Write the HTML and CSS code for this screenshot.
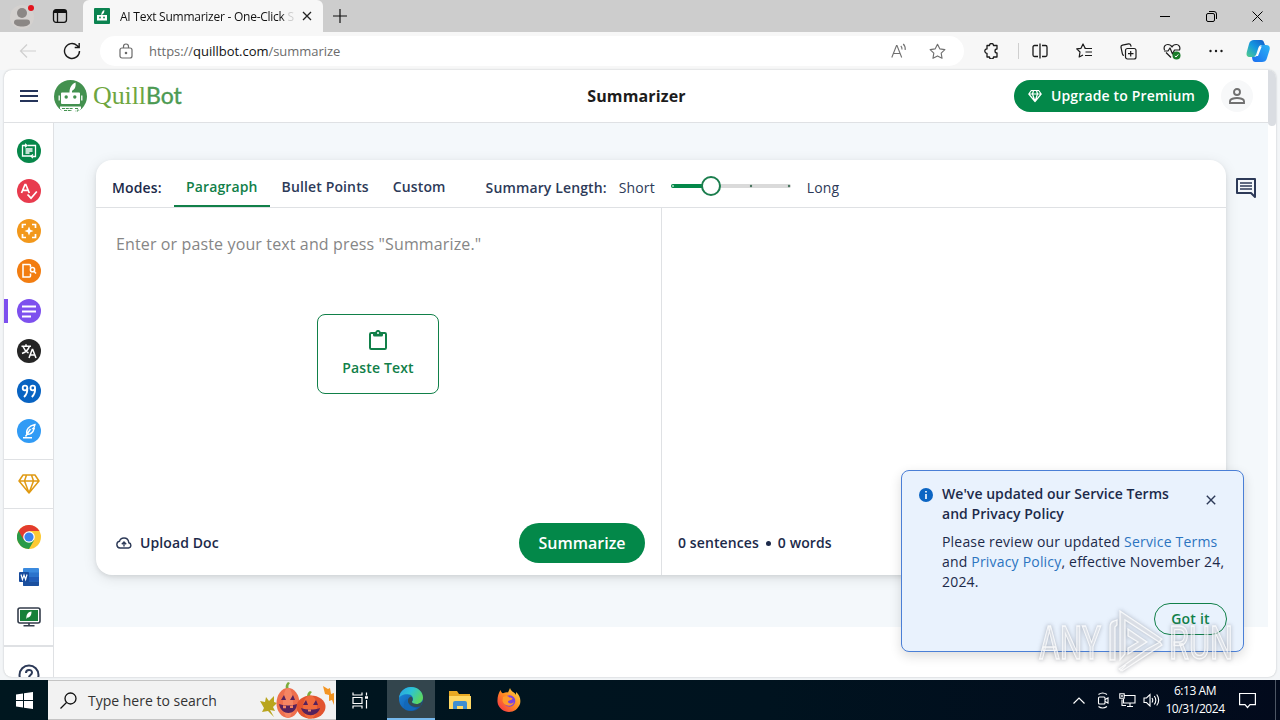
FILE: index.html
```html
<!DOCTYPE html>
<html lang="en">
<head>
    <meta charset="UTF-8">
    <meta name="viewport" content="width=device-width, initial-scale=1.0">
    <title>AI Text Summarizer</title>
    <link rel="stylesheet" href="styles.css">
</head>
<body>
<div class="tabstrip">
    <div class="profile">
        <svg width="44" height="32" viewBox="0 0 44 32"><circle cx="22" cy="17" r="12" fill="#d4d1cf"/><circle cx="22" cy="13" r="5" fill="#8b8785"/><path d="M14 22.500c0-2 1-3 3-3h10c2 0 3 1 3 3 0 2.500-4 4-8 4s-8-1.500-8-4z" fill="#8b8785"/><circle cx="31" cy="8" r="3" fill="#e3141d"/></svg>
    </div>
    <div class="workspaces">
        <svg width="16" height="16" viewBox="0 0 16 16" fill="none" stroke="#111" stroke-width="1.300"><rect x="1.500" y="1.700" width="13" height="12.600" rx="2.500"/><path d="M2 3.500h12" stroke-width="3"/><path d="M5.500 4v10"/></svg>
    </div>
    <div class="tab">
        <svg width="16" height="16" viewBox="0 0 16 16"><rect width="16" height="16" rx="1" fill="#0b8350"/><path d="M3 7h10v5.500H3zM7.300 7c0-2.500 1-4 3-5 .3 2-.6 3.700-2 4.300V7z" fill="#fff"/><circle cx="6" cy="9.500" r=".9" fill="#0b8350"/><circle cx="10" cy="9.500" r=".9" fill="#0b8350"/></svg>
        <span class="tab-title">AI Text Summarizer - One-Click S</span>
        <svg width="10" height="10" viewBox="0 0 10 10" stroke="#222" stroke-width="1.300"><path d="M1 1l8 8M9 1L1 9"/></svg>
    </div>
    <div class="new-tab">
        <svg width="14" height="14" viewBox="0 0 14 14" stroke="#111" stroke-width="1.200"><path d="M7 0v14M0 7h14"/></svg>
    </div>
    <div class="window-buttons">
        <span><svg width="10" height="10" viewBox="0 0 10 10" stroke="#000"><path d="M0 5.500h10"/></svg></span>
        <span><svg width="11" height="11" viewBox="0 0 11 11" fill="none" stroke="#000"><rect x=".5" y="2.500" width="8" height="8" rx="1.500"/><path d="M3 .5h5a2.500 2.500 0 0 1 2.500 2.500v5"/></svg></span>
        <span><svg width="11" height="11" viewBox="0 0 11 11" stroke="#000"><path d="M.5.500l10 10M10.500.500l-10 10"/></svg></span>
    </div>
</div>

<div class="toolbar">
    <span class="tool tool-first"><svg width="18" height="16" viewBox="0 0 18 16" fill="none" stroke="#cfcfcf" stroke-width="1.200"><path d="M17 8H1.500M8 1.500L1.500 8 8 14.500"/></svg></span>
    <span class="tool"><svg width="18" height="18" viewBox="0 0 18 18" fill="none" stroke="#1b1b1b" stroke-width="1.400"><path d="M16.500 9A7.500 7.500 0 1 1 14 3.400L16 5.300M16.200 1v4.500h-4.500"/></svg></span>
    <div class="address">
        <svg width="14" height="16" viewBox="0 0 14 16" fill="none" stroke="#6a6a6a" stroke-width="1.200"><rect x="1" y="5" width="12" height="10" rx="2"/><path d="M4.500 5V3.500a2.500 2.500 0 0 1 5 0V5"/><circle cx="7" cy="10" r=".7" fill="#6a6a6a"/></svg>
        <span class="url">https://<b>quillbot.com</b>/summarize</span>
        <span class="address-icon"><svg width="16" height="16" viewBox="0 0 16 16" fill="none" stroke="#707070" stroke-width="1.100"><path d="M.8 14.500L5.500 2.500h.5l4.700 12M2.500 10.500H9M9.800 3c1 .9 1.300 2.100 1.200 3.500M12.200 1c1.700 1.600 2.300 3.700 2 6"/></svg></span>
        <span class="address-icon"><svg width="17" height="17" viewBox="0 0 18 18" fill="none" stroke="#707070" stroke-width="1.200" stroke-linejoin="round"><path d="M9 1.300l2.400 4.900 5.400.8-3.900 3.800.9 5.400L9 13.700l-4.800 2.500.9-5.400L1.200 7l5.400-.8z"/></svg></span>
    </div>
    <span class="tool"><svg width="16" height="16" viewBox="0 0 16 16" fill="none" stroke="#1b1b1b" stroke-width="1.300" stroke-linejoin="round"><path d="M4 2.500h2.500a2 2 0 0 1 4 0H14V6a2 2 0 0 0 0 4v4h-3.500a2 2 0 0 1-4 0H4v-3.700a2.200 2.200 0 1 1 0-4.400z"/></svg></span>
    <span class="tool-divider"></span>
    <span class="tool"><svg width="16" height="16" viewBox="0 0 16 16" fill="none" stroke="#1b1b1b" stroke-width="1.300"><path d="M6 2.500H2.500a1.500 1.500 0 0 0-1.500 1.500v8a1.500 1.500 0 0 0 1.500 1.500H6M10 2.500h3.500A1.500 1.500 0 0 1 15 4v8a1.500 1.500 0 0 1-1.500 1.500H10M8 .5v15"/></svg></span>
    <span class="tool"><svg width="17" height="16" viewBox="0 0 17 16" fill="none" stroke="#1b1b1b" stroke-width="1.200" stroke-linejoin="round"><path d="M9.500 5.500L9 5 7 1 5 5.300l-4.300.6L4 9l-.8 5L7 12M8.500 5.500h7.500M9.500 9h6.500M9 12.500h7"/></svg></span>
    <span class="tool"><svg width="17" height="17" viewBox="0 0 17 17" fill="none" stroke="#1b1b1b" stroke-width="1.200"><rect x="5.500" y="5.500" width="10.500" height="10.500" rx="2"/><path d="M10.700 8v5.500M8 10.700h5.500M4 12.500a2 2 0 0 1-1.600-1.600L1 4.500A2 2 0 0 1 2.500 2.200l6-1.300a2 2 0 0 1 2.300 1.500l.3 1.300"/></svg></span>
    <span class="tool"><svg width="18" height="17" viewBox="0 0 18 17" fill="none" stroke="#1b1b1b" stroke-width="1.200" stroke-linejoin="round"><path d="M1.500 7C.2 3.500 2.500 1.500 4.800 1.500 6.800 1.500 8.300 2.600 9 4c.7-1.400 2.200-2.500 4.200-2.500C15.800 1.500 17.700 4 16.500 7M3 9.500l5 5M1 8h4l2-3 2.500 6L11.500 7H17"/><circle cx="13.500" cy="12.500" r="4" fill="#187c28" stroke="none"/><path d="M11.800 13l1.200 1 2.300-2.600" stroke="#fff" stroke-width="1"/></svg></span>
    <span class="tool"><svg width="14" height="4" viewBox="0 0 14 4" fill="#1b1b1b"><circle cx="1.500" cy="2" r="1.200"/><circle cx="7" cy="2" r="1.200"/><circle cx="12.500" cy="2" r="1.200"/></svg></span>
    <span class="tool tool-copilot">
        <svg width="24" height="24" viewBox="0 0 24 24">
            <defs>
                <linearGradient id="cp1" x1="1" y1="0" x2="0" y2="1"><stop offset="0" stop-color="#1559c9"/><stop offset=".5" stop-color="#1498e0"/><stop offset="1" stop-color="#55cf88"/></linearGradient>
                <linearGradient id="cp2" x1="0" y1="1" x2="1" y2="0"><stop offset="0" stop-color="#1b6df0"/><stop offset="1" stop-color="#2cb4f5"/></linearGradient>
            </defs>
            <path d="M8 1h7c2 0 2.600 1 3.200 3L19 6h-3c-2 0-3 1-3.700 3l-2.300 7c-.7 1.500-1.500 2-3 2H4c-3 0-4-1.500-3.200-5L3 5c.9-3 2.500-4 5-4z" fill="url(#cp1)"/>
            <path d="M16 23H9.500c-2 0-2.700-1-3.200-3L6 18h2c2 0 3-1 3.700-3l2.500-7c.6-1.500 1.300-2 3-2H20c3 0 4.400 1.500 3.500 5L21 19c-.8 3-2.500 4-5 4z" fill="url(#cp2)"/>
            <path d="M13.500 7.500h2.200L12 17H8.500c1.500 0 2.400-1 3-2.700z" fill="#fff"/>
        </svg>
    </span>
</div>

<div class="page">
    <div class="page-body">
        <header class="header">
            <div class="header-left">
                <svg width="18" height="12" viewBox="0 0 18 12" fill="#25345a"><path d="M0 0h18v2H0zM0 5h18v2H0zM0 10h18v2H0z"/></svg>
                <svg class="logo-mark" width="33" height="33" viewBox="0 0 33 33"><circle cx="16.500" cy="16.500" r="16.500" fill="#43914f"/><path d="M6 26.500h21v2L23.500 33H10L6 28.500z" fill="#fff"/><path d="M8 12.500h7.500c0-4 1.500-8 6-10 .7 4-.7 7-3.500 8.200v1.800h7a1 1 0 0 1 1 1V23a1 1 0 0 1-1 1H8a1 1 0 0 1-1-1v-9.500a1 1 0 0 1 1-1z" fill="#fff"/><path d="M5.200 15.500v5M27.800 15.500v5" stroke="#fff" stroke-width="1.300"/><circle cx="12.200" cy="17" r="1.700" fill="#43914f"/><circle cx="20.800" cy="17" r="1.700" fill="#43914f"/><path d="M8 28.500h11M10 30.500h8M21 28.500h3v2.500h-2.500" stroke="#43914f" stroke-width="1" stroke-dasharray="3 .8" fill="none"/></svg>
                <span class="logo-text"><span class="logo-quill">Quill</span><span class="logo-bot">Bot</span></span>
            </div>
            <h1>Summarizer</h1>
            <div class="header-right">
                <button type="button" class="upgrade">
                    <svg width="14" height="14" viewBox="0 0 14 14" fill="none" stroke="#fff" stroke-width="1.200" stroke-linejoin="round"><path d="M3.300 1.500h7.400L13.200 5 7 12.500.8 5zM.8 5h12.400M7 12.500L4.500 5 5.500 1.500M7 12.500L9.500 5l-1-3.500"/></svg>
                    Upgrade to Premium
                </button>
                <span class="account"><svg width="16" height="16" viewBox="0 0 16 16" fill="none" stroke="#717171" stroke-width="1.900"><circle cx="8" cy="4" r="3"/><path d="M1 15v-2c0-2 4-3 7-3s7 1 7 3v2z"/></svg></span>
            </div>
        </header>
        <div class="content">
            <nav class="sidebar">
                <div class="side-group">
                    <a class="side-item"><svg width="24" height="24" viewBox="0 0 24 24" fill="none" stroke="#fff" stroke-width="1.300"><circle cx="12" cy="12" r="12" fill="#07874a" stroke="none"/><path d="M9 6.500H5.500v10.500h10M15.500 17.500h3V6.500H10.500M8.500 10h7M8.500 12h7M8.500 14h4"/><path d="M8 4.700l2 1.800-2 1.800M16 15.500l-2 1.800 2 1.800" stroke-width="1.200"/></svg></a>
                    <a class="side-item"><svg width="24" height="24" viewBox="0 0 24 24" fill="none" stroke="#fff" stroke-width="1.700"><circle cx="12" cy="12" r="12" fill="#e83b4e" stroke="none"/><path d="M4.500 14L8 5.500h.8L12.300 14M5.800 11.300H11M10.500 15.500l3.500 3.700 5.800-6.700"/></svg></a>
                    <a class="side-item"><svg width="24" height="24" viewBox="0 0 24 24" fill="none" stroke="#fff" stroke-width="1.700"><circle cx="12" cy="12" r="12" fill="#f2981b" stroke="none"/><path d="M9 5.500H5.500V9M15 5.500h3.500V9M9 18.500H5.500V15M15 18.500h3.500V15"/><path d="M12 7.500l1.300 3.200 3.200 1.300-3.200 1.300L12 16.500l-1.300-3.200L7.500 12l3.200-1.300z" fill="#fff" stroke="none"/></svg></a>
                    <a class="side-item"><svg width="24" height="24" viewBox="0 0 24 24" fill="none" stroke="#fff" stroke-width="1.500"><circle cx="12" cy="12" r="12" fill="#f27d11" stroke="none"/><path d="M13.500 8.500V6.500a1 1 0 0 0-1-1H6v12.500h6.500a1 1 0 0 0 1-1V14.500"/><circle cx="15.500" cy="10.700" r="2.100"/><path d="M17 12.300l2 2.200"/></svg></a>
                    <a class="side-item active"><svg width="24" height="24" viewBox="0 0 24 24" fill="none" stroke="#fff" stroke-width="2.200"><circle cx="12" cy="12" r="12" fill="#7d50ee" stroke="none"/><path d="M5 7.500h14M5 12.500h14M5 17.500h9"/></svg></a>
                    <a class="side-item"><svg width="24" height="24" viewBox="0 0 24 24" fill="none" stroke="#fff" stroke-width="1.500"><circle cx="12" cy="12" r="12" fill="#262626" stroke="none"/><path d="M4.500 7.300h9.500M9 5.300v2M6 7.500c1.500 4 3.700 5.500 5.500 6.500M12.300 7.500c-1 3.500-4 5.800-7.300 7M12 19l3.200-8.500h.5L19 19M13.200 16h4.600"/></svg></a>
                    <a class="side-item"><svg width="24" height="24" viewBox="0 0 24 24" fill="none" stroke="#fff" stroke-width="1.800"><circle cx="12" cy="12" r="12" fill="#0863c2" stroke="none"/><circle cx="8" cy="9" r="2.300"/><circle cx="15.800" cy="9" r="2.300"/><path d="M10.300 9c.3 3.500-.6 6.500-3.300 9M18.100 9c.3 3.500-.6 6.500-3.300 9"/></svg></a>
                    <a class="side-item"><svg width="24" height="24" viewBox="0 0 24 24" fill="none" stroke="#fff" stroke-width="1.400"><circle cx="12" cy="12" r="12" fill="#319bf5" stroke="none"/><path d="M6 18.800h9M8.500 17.500l5-7.500M10 15.500C8.500 11 12 6.500 18 5.500c-.3 2-.8 3-2 4h1.200c-1 3.500-3.700 6-7.200 6z"/></svg></a>
                </div>
                <div class="side-group side-premium">
                    <a class="side-item"><svg width="22" height="20" viewBox="0 0 22 20" fill="none" stroke="#e09a13" stroke-width="1.500" stroke-linejoin="round"><path d="M5 1h12l4 6-10 12L1 7zM1 7h20M11 19L6.500 7 8.500 1M11 19l4.500-12-2-6"/></svg></a>
                </div>
                <div class="side-group">
                    <a class="side-item"><svg width="24" height="24" viewBox="0 0 24 24"><circle cx="12" cy="12" r="12" fill="#fcc934"/><path d="M1.600 6A12 12 0 0 0 12 24l5.200-9L12 12z" fill="#2a9a48"/><path d="M1.600 6A12 12 0 0 1 22.400 6H12L6.800 15z" fill="#e33b2e"/><circle cx="12" cy="12" r="5.800" fill="#fff"/><circle cx="12" cy="12" r="4.600" fill="#3b82ee"/></svg></a>
                    <a class="side-item"><svg width="22" height="20" viewBox="0 0 22 20"><rect x="5" y="1" width="16" height="18" rx="1" fill="#3b8ade"/><path d="M5 5.500h16V10H5z" fill="#2b73cc"/><path d="M5 10h16v4.500H5z" fill="#205cb8"/><path d="M5 14.500h16V18a1 1 0 0 1-1 1H6a1 1 0 0 1-1-1z" fill="#1b4f9e"/><rect x="1" y="5" width="10" height="10" rx="1" fill="#174b9c"/><path d="M3 7.500l1.400 5L6 8l1.600 4.500 1.400-5" fill="none" stroke="#fff" stroke-width="1.200"/></svg></a>
                    <a class="side-item"><svg width="24" height="20" viewBox="0 0 24 20"><rect x="1" y="1" width="22" height="15" rx="2" fill="#fff" stroke="#343d4b" stroke-width="1.600"/><rect x="3" y="3" width="18" height="11" fill="#168039"/><path d="M9.500 12c-.5-4 1-7 5-7.500 0 3.500-1.300 6-4 6z" fill="#fff"/><path d="M12 16v2.500M6.500 18.800h11" stroke="#343d4b" stroke-width="1.600"/></svg></a>
                </div>
                <div class="side-help"><svg width="22" height="22" viewBox="0 0 22 22" fill="none" stroke="#2d3a58" stroke-width="2"><circle cx="11" cy="11" r="9.500"/><path d="M8 9c0-4 6-4 6-.5 0 2.500-3 2.500-3 5"/></svg></div>
            </nav>
            <main>
                <section class="card">
                    <div class="modes">
                        <span class="modes-label">Modes:</span>
                        <a class="mode selected">Paragraph</a>
                        <a class="mode">Bullet Points</a>
                        <a class="mode">Custom</a>
                        <span class="length-label">Summary Length:</span>
                        <span class="length-text">Short</span>
                        <span class="slider"><svg width="120" height="22" viewBox="0 0 120 22"><path d="M2 11h116" stroke="#dadada" stroke-width="4" stroke-linecap="round"/><path d="M2 11h38" stroke="#038849" stroke-width="4" stroke-linecap="round"/><circle cx="2" cy="11" r="1" fill="#b5e0c8"/><circle cx="80" cy="11" r="1.200" fill="#4b7561"/><circle cx="118" cy="11" r="1.200" fill="#4b7561"/><circle cx="40" cy="11" r="9" fill="#fff" stroke="#1c7e4e" stroke-width="2"/></svg></span>
                        <span class="length-text">Long</span>
                    </div>
                    <div class="panels">
                        <div class="input-panel">
                            <p class="placeholder">Enter or paste your text and press "Summarize."</p>
                            <button type="button" class="paste">
                                <svg width="18" height="20" viewBox="0 0 18 20"><rect x="1" y="3" width="16" height="16" rx="1.200" fill="none" stroke="#118049" stroke-width="2"/><path d="M4 2h2.300a2.800 2.800 0 0 1 5.400 0H14v3a1.500 1.500 0 0 1-1.500 1.500h-7A1.500 1.500 0 0 1 4 5z" fill="#118049"/><circle cx="9" cy="3" r="1" fill="#fff"/></svg>
                                Paste Text
                            </button>
                            <div class="input-footer">
                                <span class="upload">
                                    <svg width="16" height="12" viewBox="0 0 16 12" fill="none" stroke="#2d3a58" stroke-width="1.400"><path d="M4 11h8.500a2.700 2.700 0 0 0 .3-5.300C12.500 3 10.500 1 8 1S4 2.300 3.500 4.300A3.400 3.400 0 0 0 4 11zM8 9.500V5.500M5.800 7.200L8 5l2.200 2.200"/></svg>
                                    <span>Upload Doc</span>
                                </span>
                                <button type="button" class="summarize">Summarize</button>
                            </div>
                        </div>
                        <div class="output-panel">
                            <span>0 sentences</span><i class="dot"></i><span>0 words</span>
                        </div>
                    </div>
                </section>
                <svg class="comments" width="20" height="20" viewBox="0 0 20 20"><path d="M1 1h18v18l-4-4H1z" fill="none" stroke="#2d3a58" stroke-width="2" stroke-linejoin="round"/><path d="M4 5h12M4 8h12M4 11h12" stroke="#2d3a58" stroke-width="1.700"/></svg>
            </main>
        </div>
    </div>
    <div class="scrollbar"></div>
</div>

<aside class="notice">
    <svg class="notice-icon" width="14" height="14" viewBox="0 0 14 14"><circle cx="7" cy="7" r="7" fill="#0b65c3"/><path d="M7 6v5M7 3v1.600" stroke="#fff" stroke-width="1.600"/></svg>
    <div class="notice-body">
        <h2>We've updated our Service Terms<br>and Privacy Policy</h2>
        <p>Please review our updated <a>Service Terms</a><br>and <a>Privacy Policy</a>, effective November 24,<br>2024.</p>
        <button type="button" class="got-it">Got it</button>
    </div>
    <svg class="notice-close" width="10" height="10" viewBox="0 0 10 10" stroke="#2d3a58" stroke-width="1.400"><path d="M.8.8l8.400 8.400M9.200.8L.8 9.200"/></svg>
</aside>

<svg class="watermark" width="210" height="70" viewBox="0 0 210 70">
    <g fill="#fff" fill-opacity=".4" stroke="#fff" stroke-opacity=".8" stroke-width="1.300">
        <text x="9" y="54" textLength="62" lengthAdjust="spacingAndGlyphs">ANY</text>
        <text x="139" y="54" textLength="64" lengthAdjust="spacingAndGlyphs">RUN</text>
        <path d="M80 55V22q0-5 4-6l3-1v5l-2 2v33zM90 6l42 28-3 3-34-22v34l-5 6zM90 66l6-6M93 61l24-17 13-7 2 3-40 26-3-2zM98 24l19 13-19 12v-6l10-6-10-6z"/>
    </g>
</svg>

<footer class="taskbar">
    <span class="start"><svg width="17" height="17" viewBox="0 0 17 17" fill="#fff"><path d="M0 2.500l7-1V8H0zM8 1.300L17 0v8H8zM0 9h7v6.500l-7-1zM8 9h9v8l-9-1.300z"/></svg></span>
    <div class="search">
        <svg width="17" height="17" viewBox="0 0 17 17" fill="none" stroke="#111" stroke-width="1.300"><circle cx="10.500" cy="6.500" r="5.500"/><path d="M6.500 10.500L.5 16.500"/></svg>
        <span>Type here to search</span>
        <svg class="pumpkins" width="76" height="38" viewBox="0 0 76 38">
            <path d="M2 20l5 1 1-5 3 4 5-5v6l3 1-4 4 2 4-5-1 4 7-6-6-6 1 2-4z" fill="#b9a51e"/>
            <path d="M65 5l5 3 2-1 1 6 3-1v12l-2-5-3 1 0-6-4-1z" fill="#f39422"/>
            <path d="M28 8c-1-3 0-5 2-7l2 1c-2 2-2 4-1 6zM49 16c0-3 1-5 3-6l2 1c-2 2-2 3-2 5z" fill="#7cab3a"/>
            <ellipse cx="30" cy="22" rx="11.500" ry="15" fill="#ee6f4e"/><ellipse cx="30" cy="22" rx="5" ry="15" fill="#f58563"/>
            <ellipse cx="53" cy="26" rx="14.500" ry="11.500" fill="#e2542f"/><ellipse cx="52" cy="26" rx="7" ry="11.500" fill="#f06a3c"/>
            <path d="M23 19l3-5 2 5zM32 19l3-5 2 5zM21 23c6 2 12 2 18 0-1 12-16 12-18 0zM45 24l3-5 2 5zM55 24l3-5 2 5zM43 27c6 2 13 2 19 0-2 9-16 10-19 0z" fill="#57225c"/>
            <path d="M25 24.500l3 .2v2.500h-3zM32 24.700l3-.4v2.700h-3zM50 28.500h3v2h-3z" fill="#f58563"/>
        </svg>
    </div>
    <span class="task"><svg width="17" height="17" viewBox="0 0 17 17" fill="none" stroke="#fff" stroke-width="1.200"><path d="M1 .5V3h9V.5M1 16.500V14h9v2.500M1 5.500h9v6H1zM14.500.5v3M14.500 8v8.500"/><path d="M13 5.500h3" stroke-width="2.500"/></svg></span>
    <span class="task open">
        <svg width="24" height="24" viewBox="0 0 24 24">
            <defs>
                <linearGradient id="e1" x1="0" y1="0" x2="1" y2=".5"><stop offset="0" stop-color="#2a9de5"/><stop offset=".5" stop-color="#2cc3d5"/><stop offset="1" stop-color="#5bd662"/></linearGradient>
                <linearGradient id="e2" x1="0" y1="0" x2="1" y2="1"><stop offset="0" stop-color="#1d8cdf"/><stop offset="1" stop-color="#0d4a9b"/></linearGradient>
            </defs>
            <circle cx="12" cy="12" r="12" fill="url(#e2)"/>
            <path d="M0 11C1 4 6 0 12 0c7 0 12 5 12 10.500 0 4-3 6.500-6.500 6.500-3 0-5-1-4.500-2.500 2-2 1-6.500-3-7C5 6.500 1 9 0 11z" fill="url(#e1)"/>
            <path d="M13 14.500c-.5 1.500 1.500 2.500 4.500 2.500 2 0 3.500-.5 6-2.500L21.500 19.500C16 21 10 19 9 15c-.5-3 1-5 3-5.500 2 1 2 3.500 1 5z" fill="#344a52"/>
            <path d="M9 12c-2 4 2 9 9 9-3 3-8 3.500-12 1C4 17 5 12.500 9 12z" fill="#1368b8"/>
        </svg>
    </span>
    <span class="task"><svg width="22" height="20" viewBox="0 0 22 20"><path d="M0 1h8l2 3h11v15H0z" fill="#e8a923"/><path d="M0 6h22v13H0z" fill="#ffd864"/><path d="M4 19v-6q0-2 2-2h10q2 0 2 2v6h-4v-3H8v3z" fill="#3f8ed0"/></svg></span>
    <span class="task">
        <svg width="24" height="24" viewBox="0 0 24 24">
            <defs><linearGradient id="ff" x1="1" y1="0" x2="0" y2="1"><stop offset="0" stop-color="#ffe14a"/><stop offset=".5" stop-color="#ff8a21"/><stop offset="1" stop-color="#f3244f"/></linearGradient></defs>
            <path d="M3.500 2C4 4 5 5 6 5.200 8 4.500 10 4 11 4.500L13 0c1 4 5 4 6 7V4c4 3 5 8 4 12-2 5-6 8-11 8S1 20 .5 14C.2 9 1.500 5 3.500 2z" fill="url(#ff)"/>
            <circle cx="12.500" cy="13" r="5.800" fill="#7a42e0"/>
            <path d="M6 9c3-1.500 5-1 6.500.5 2 0 3 .5 3 1.500-1 1.500-4 1-4.500 2.500 0 2 3 3 6 .5-1 5-10 5-11.500-1z" fill="#ff9a2a"/>
        </svg>
    </span>
    <div class="tray">
        <span><svg width="12" height="7" viewBox="0 0 12 7" fill="none" stroke="#fff" stroke-width="1.200"><path d="M.5 6.500L6 1l5.500 5.500"/></svg></span>
        <span><svg width="12" height="17" viewBox="0 0 12 17" fill="none" stroke="#fff" stroke-width="1.100"><rect x="1.500" y="5" width="6.500" height="7" rx="1"/><path d="M8 7.500l3-1.500v5L8 9.500M1.500 2.500q4-3 8.500 0M1.500 14.500q4 3 8.500 0"/></svg></span>
        <span><svg width="17" height="14" viewBox="0 0 17 14" fill="none" stroke="#fff" stroke-width="1.100"><path d="M5 2.500h11v7.500H4.500V6M8 13.500h6M11 10v3.500M3 6.500v6h4"/><path d="M.8.8h4.400v4.400H.8z"/><circle cx="3" cy="3" r=".4"/></svg></span>
        <span><svg width="17" height="14" viewBox="0 0 17 14" fill="none" stroke="#fff" stroke-width="1.100"><path d="M1 5v4.500h2.500L7 13V1.500L3.500 5zM9 5q1.500 2.200 0 4.500M11.300 3q3 4.200 0 8.500M13.700 1.500q4 5.500 0 11"/></svg></span>
    </div>
    <div class="clock">6:13 AM<br>10/31/2024</div>
    <svg class="messages" width="17" height="17" viewBox="0 0 17 17" fill="none" stroke="#fff" stroke-width="1.200"><path d="M.6 1.500h15.800v11.200H11L8.500 15.500 6 12.700H.6z"/></svg>
    <span class="show-desktop"></span>
</footer>
</body>
</html>
```

FILE: styles.css
```css
* {
    box-sizing: border-box;
}
body {
    margin: 0;
    width: 1280px;
    height: 720px;
    overflow: hidden;
    position: relative;
    background-color: #f3f5f7;
    font-family: "Open Sans", sans-serif;
    color: #1c2a4a;
}
svg {
    display: block;
    flex: none;
}
h1, h2, p {
    margin: 0;
}
button {
    font-family: inherit;
    padding: 0;
    border: 0;
    display: flex;
    align-items: center;
    justify-content: center;
}

/* browser window */
.tabstrip {
    display: flex;
    align-items: center;
    height: 32px;
    background-color: #cdcdcd;
}
.profile {
    width: 44px;
}
.workspaces {
    width: 39px;
    padding-left: 8px;
}
.tab {
    display: flex;
    align-items: center;
    width: 240px;
    height: 32px;
    padding-left: 11px;
    background-color: #f7f7f7;
    border-radius: 6px 6px 0 0;
}
.tab-title {
    width: 175px;
    margin: 0 7px 0 10px;
    overflow: hidden;
    white-space: nowrap;
    font-size: 12px;
    letter-spacing: -0.25px;
    background: linear-gradient(90deg, #111 162px, #ccc 168px);
    -webkit-background-clip: text;
    color: transparent;
}
.new-tab {
    padding-left: 10px;
}
.window-buttons {
    display: flex;
    margin-left: auto;
}
.window-buttons span {
    display: flex;
    justify-content: center;
    width: 46px;
}
.toolbar {
    display: flex;
    align-items: center;
    height: 38px;
    background-color: #f7f7f7;
}
.tool {
    display: flex;
    justify-content: center;
    width: 44px;
}
.tool-first {
    margin-left: 6px;
}
.tool-copilot {
    width: 40px;
}
.tool-divider {
    width: 1px;
    height: 16px;
    margin: 0 -1px 0 5px;
    background-color: #cfcfcf;
}
.address {
    display: flex;
    align-items: center;
    width: 864px;
    height: 30px;
    margin: 0 5px 0 6px;
    padding: 0 18px 0 19px;
    background-color: #fff;
    border-radius: 15px;
}
.url {
    flex: 1;
    margin-left: 16px;
    font-size: 13px;
    letter-spacing: -0.03px;
    color: #6b6b6b;
}
.url b {
    font-weight: 400;
    color: #111;
}
.address-icon {
    margin-left: 22px;
}

/* page */
.page {
    display: flex;
    height: 607px;
    margin: 0 4px;
    overflow: hidden;
    background-color: #fff;
    border-radius: 8px;
    box-shadow: 0 0 2px #b5b9bd;
}
.page-body {
    flex: 1;
}
.scrollbar {
    width: 8px;
    height: 56px;
    background-color: #dadde2;
    border-radius: 0 0 4px 4px;
}
.header {
    display: grid;
    grid-template-columns: 1fr auto 1fr;
    align-items: center;
    height: 53px;
    padding: 0 15px 0 16px;
    border-bottom: 1px solid #dfe1e4;
}
.header-left {
    display: flex;
    align-items: center;
}
.logo-mark {
    margin: 0 6px 0 16px;
}
.logo-text {
    line-height: 32px;
}
.logo-quill {
    font-family: "Liberation Serif", serif;
    font-size: 26px;
    letter-spacing: -0.1px;
    color: #6fa63f;
}
.logo-bot {
    font-family: Lato, sans-serif;
    font-size: 23px;
    -webkit-text-stroke: 0.4px #4c9a52;
    color: #4c9a52;
}
h1 {
    font-size: 16px;
    font-weight: 700;
    letter-spacing: 0.15px;
    color: #1c1c1c;
}
.header-right {
    display: flex;
    justify-content: flex-end;
    align-items: center;
    gap: 12px;
}
.upgrade {
    width: 195px;
    height: 32px;
    padding-bottom: 1px;
    gap: 9px;
    border-radius: 16px;
    background-color: #038849;
    color: #fff;
    font-size: 14px;
    font-weight: 600;
    letter-spacing: 0.15px;
}
.account {
    display: flex;
    align-items: center;
    justify-content: center;
    width: 32px;
    height: 32px;
    border-radius: 50%;
    background-color: #f7f8f9;
}
.content {
    display: flex;
    height: 554px;
}
.sidebar {
    width: 50px;
    flex: none;
    border-right: 1px solid #dfe1e4;
    overflow: hidden;
}
.side-group {
    padding: 8px 0;
    border-bottom: 1px solid #dfe1e4;
}
.side-premium {
    padding: 4px 0;
}
.side-group:nth-child(3) {
    border-bottom-width: 2px;
}
.side-item {
    display: flex;
    align-items: center;
    justify-content: center;
    height: 40px;
}
.side-item.active {
    background: linear-gradient(#7d50ee, #7d50ee) left center / 4px 24px no-repeat;
}
.side-help {
    display: flex;
    justify-content: center;
    padding-top: 17px;
}
main {
    display: flex;
    align-items: flex-start;
    flex: 1;
    height: 504px;
    padding: 37px 0 0 42px;
    background-color: #f4f8fb;
}
.comments {
    margin: 18px 0 0 10px;
}
.card {
    width: 1130px;
    height: 415px;
    background-color: #fff;
    border-radius: 16px;
    box-shadow: 0 3px 14px rgba(0, 0, 0, 0.1), 0 2px 4px rgba(0, 0, 0, 0.08);
}
.modes {
    display: flex;
    align-items: center;
    height: 48px;
    padding: 7px 0 0 16px;
    border-bottom: 1px solid #dfe1e4;
    font-size: 14px;
    font-weight: 600;
    letter-spacing: 0.13px;
    color: #2d3a58;
    white-space: nowrap;
}
.modes-label {
    width: 62px;
    color: #1c2a4a;
}
.mode {
    display: flex;
    align-items: center;
    justify-content: center;
    align-self: stretch;
    padding: 1px 12px 0;
    border-bottom: 2px solid transparent;
}
.mode.selected {
    color: #118049;
    border-bottom-color: #118049;
}
.length-label {
    margin: 0 12px 0 28px;
}
.length-text {
    font-weight: 400;
}
.slider {
    margin: -2px 16px 0;
}
.panels {
    display: flex;
    height: 367px;
}
.input-panel {
    display: flex;
    flex-direction: column;
    width: 566px;
    padding: 24px 16px 12px 20px;
    border-right: 1px solid #dfe1e4;
}
.placeholder {
    font-size: 16px;
    line-height: 24px;
    letter-spacing: 0.13px;
    color: #868686;
}
.paste {
    flex-direction: column;
    gap: 8px;
    width: 122px;
    height: 80px;
    margin: 58px 0 0 201px;
    background-color: #fff;
    border: 1px solid #118049;
    border-radius: 8px;
    color: #118049;
    font-size: 14px;
    line-height: 20px;
    font-weight: 600;
    letter-spacing: 0.13px;
}
.input-footer {
    display: flex;
    align-items: center;
    justify-content: space-between;
    margin-top: auto;
}
.upload {
    display: flex;
    align-items: center;
    gap: 8px;
    font-size: 14px;
    font-weight: 600;
    letter-spacing: 0.1px;
}
.upload span {
    padding-bottom: 2px;
}
.summarize {
    width: 126px;
    height: 40px;
    border-radius: 20px;
    background-color: #038849;
    color: #fff;
    font-size: 16px;
    font-weight: 600;
}
.output-panel {
    display: flex;
    align-items: flex-end;
    padding: 0 0 22px 16px;
    font-size: 14px;
    line-height: 20px;
    font-weight: 600;
    letter-spacing: 0.1px;
}
.dot {
    width: 5px;
    height: 5px;
    margin: 0 7px 7px;
    border-radius: 50%;
    background-color: #1c2a4a;
}

/* service terms notice */
.notice {
    position: absolute;
    left: 901px;
    top: 470px;
    display: flex;
    align-items: flex-start;
    width: 343px;
    height: 182px;
    padding: 13px 16px 16px 17px;
    background-color: #e9f2fd;
    border: 1px solid #4a7fd6;
    border-radius: 8px;
    box-shadow: 0 4px 12px rgba(0, 0, 0, 0.14);
    font-size: 14px;
    line-height: 20px;
    white-space: nowrap;
}
.notice-icon {
    margin: 4px 9px 0 0;
}
.notice-body {
    display: flex;
    flex-direction: column;
    flex: 1;
}
.notice h2 {
    font-size: 14px;
    font-weight: 600;
    letter-spacing: 0.05px;
}
.notice p {
    margin-top: 8px;
    letter-spacing: 0.19px;
}
.notice a {
    color: #2c74c0;
}
.got-it {
    align-self: flex-end;
    width: 73px;
    height: 32px;
    margin-top: 11px;
    padding-bottom: 2px;
    background: none;
    border: 1px solid #118049;
    border-radius: 16px;
    color: #118049;
    font-size: 14px;
    font-weight: 600;
    letter-spacing: 0.2px;
}
.notice-close {
    position: absolute;
    right: 27px;
    top: 24px;
}
.watermark {
    position: absolute;
    left: 1030px;
    top: 605px;
    filter: drop-shadow(0 0 2px rgba(90, 95, 110, 0.65));
    font-family: Roboto, sans-serif;
    font-size: 46px;
}

/* taskbar */
.taskbar {
    display: flex;
    align-items: center;
    height: 40px;
    margin-top: 3px;
    background: linear-gradient(90deg, #00171f, #00131f 60%, #020a1c);
    color: #fff;
}
.start {
    display: flex;
    justify-content: center;
    width: 48px;
}
.search {
    display: flex;
    align-items: center;
    width: 288px;
    height: 40px;
    padding-left: 12px;
    background-color: #f2f2f2;
    border: 1px solid #c4c4c4;
    border-width: 1px 0;
    color: #333;
    font-size: 14px;
}
.search span {
    margin-left: 11px;
}
.pumpkins {
    margin: 0 2px 0 auto;
}
.task {
    display: flex;
    align-items: center;
    justify-content: center;
    width: 49px;
    height: 40px;
}
.task.open {
    margin-left: 2px;
    width: 48px;
    background-color: #33454d;
    border-bottom: 2px solid #76b9ed;
}
.tray {
    display: flex;
    align-items: center;
    margin-left: auto;
}
.tray span {
    display: flex;
    justify-content: center;
    width: 24px;
}
.clock {
    width: 64px;
    font-size: 12px;
    line-height: 18px;
    text-align: center;
    letter-spacing: -0.45px;
}
.messages {
    margin: 0 19px 0 12px;
}
.show-desktop {
    width: 5px;
    height: 40px;
    border-left: 1px solid #4d5664;
}
```
